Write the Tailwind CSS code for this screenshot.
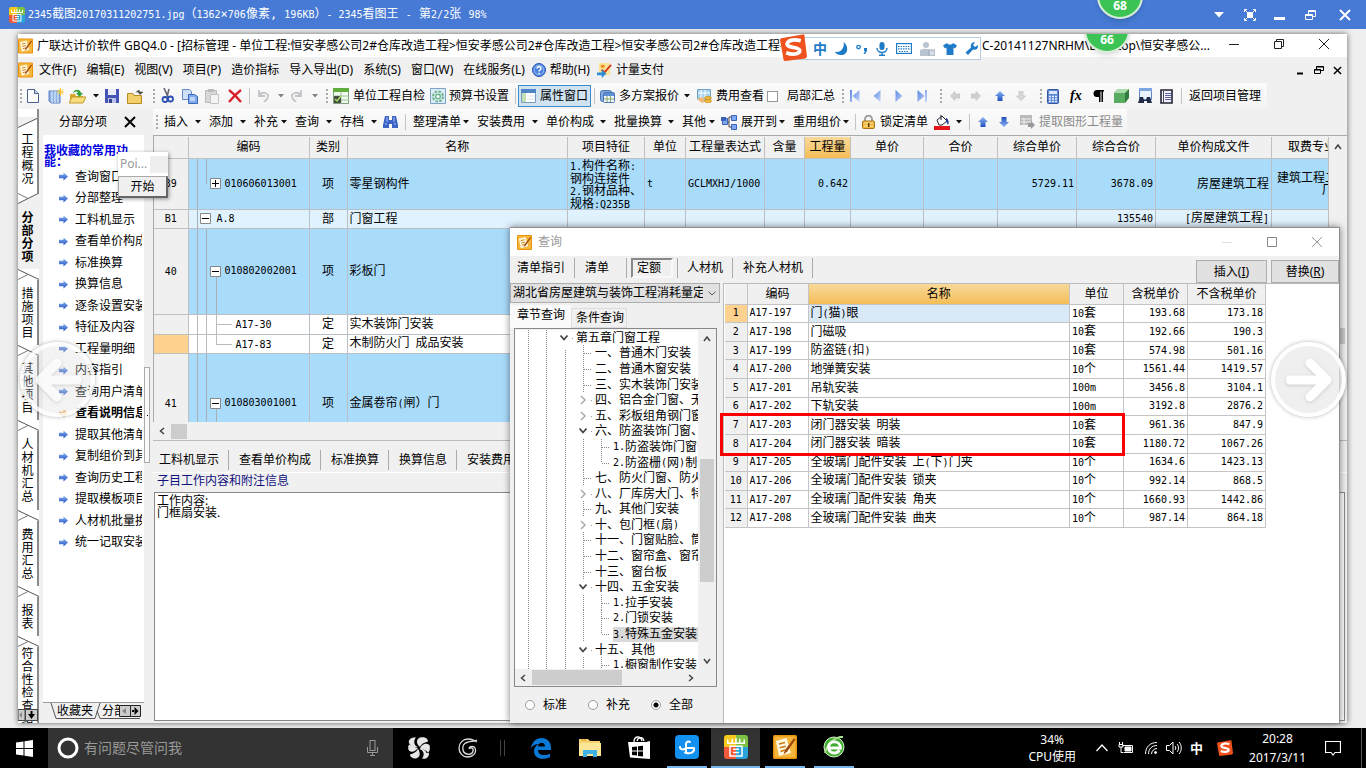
<!DOCTYPE html>
<html lang="zh-CN">
<head>
<meta charset="utf-8">
<title>2345看图王</title>
<script src="https://cdn.jsdelivr.net/npm/@tailwindcss/browser@4"></script>
</head>
<body class="h-screen flex flex-col overflow-hidden bg-[#efefef] text-[12px] text-black leading-4 font-['Noto_Sans','Noto_Sans_CJK_SC',sans-serif] whitespace-nowrap">

<svg class="absolute size-0" aria-hidden="true">
  <defs>
    <linearGradient id="blu" x1="0" y1="0" x2="0" y2="1"><stop offset="0" stop-color="#8db4f2"/><stop offset="1" stop-color="#1f4fc0"/></linearGradient>
    <linearGradient id="soft" x1="0" y1="0" x2="1" y2="1"><stop offset="0" stop-color="#5c86e0"/><stop offset="1" stop-color="#c5d6fa"/></linearGradient>
    <symbol id="app" viewBox="0 0 16 16"><rect width="16" height="16" rx="1" fill="#e8920c"/><rect x="1" y="1" width="14" height="14" fill="#f6b63c"/><path d="M2 4l7-2 3 10-8 2z" fill="#fff8e0"/><path d="M4 6l4-1M4.500 8.500l4-1M5 11l3-1" stroke="#c77a10" fill="none"/><path d="M14 2L8 10l-1 3 2.500-2L15 3z" fill="#a3490c"/></symbol>
    <symbol id="viewer" viewBox="0 0 16 16"><path d="M2 0h6v8H0V2a2 2 0 012-2z" fill="#f7c81e"/><path d="M8 0h6a2 2 0 012 2v6H8z" fill="#7cc142"/><path d="M0 8h8v8H2a2 2 0 01-2-2z" fill="#ee5a3a"/><path d="M8 8h8v6a2 2 0 01-2 2H8z" fill="#2aa3d8"/><path d="M2.500 5.500V3M5.500 5V2.500M8 5V2M10.500 5V2.500M13.500 5.500V3M2 5.500h12M4 7.500h8V14H4zM6 9.500h4M6 11.700h4" stroke="#fff" fill="none"/></symbol>
    <symbol id="go" viewBox="0 0 10 10"><path d="M0 3h5V0.500L10 5 5 9.500V7H0z" fill="url(#blu)"/></symbol>
    <symbol id="up" viewBox="0 0 10 10"><path d="M5 0l5 5H7.500v5h-5V5H0z" fill="url(#blu)"/></symbol>
    <symbol id="dn" viewBox="0 0 6 4"><path d="M0 0h6L3 3.500z" fill="#111"/></symbol>
    <symbol id="grip" viewBox="0 0 3 16"><path d="M1 1v15" stroke="#aaa" stroke-width="2" stroke-dasharray="2 2"/></symbol>
    <symbol id="leaf" viewBox="0 0 20 16"><path d="M8.500 0v16M9 8.500h8" stroke="#888" stroke-dasharray="1 1" fill="none"/></symbol>
    <symbol id="leafend" viewBox="0 0 20 16"><path d="M8.500 0v8M9 8.500h8" stroke="#888" stroke-dasharray="1 1" fill="none"/></symbol>
    <symbol id="vert" viewBox="0 0 18 16"><path d="M8.500 0v16" stroke="#888" stroke-dasharray="1 1" fill="none"/></symbol>
    <symbol id="open" viewBox="0 0 20 16"><path d="M4.500 5.500L8 9.500l3.500-4" stroke="#444" stroke-width="1.800" fill="none"/><path d="M16 8.500h1" stroke="#999"/></symbol>
    <symbol id="shut" viewBox="0 0 20 16"><path d="M6 4l4 4-4 4" stroke="#aaa" stroke-width="1.500" fill="none"/><path d="M16 8.500h1" stroke="#999"/></symbol>
    <symbol id="zig" viewBox="0 0 21 11"><path d="M0 0h21v11H0z" fill="#fff"/><path d="M0 0.500l21 10" stroke="#555" fill="none"/><path d="M0 10.500l10-5" stroke="#777" fill="none"/></symbol>
    <symbol id="sogou" viewBox="0 0 26 26"><path d="M1 4L22 0.500a1 1 0 011.500 1L26 22l-1.500 1.500L5 26a1.500 1.500 0 01-1.500-1L0 5.500z" fill="#f0521d"/><path d="M20 6.500c-5-1.500-12-1-13 2.500-1 5 12 3 12 7s-8 4-13 2" stroke="#fff" stroke-width="3.600" fill="none"/></symbol>
  </defs>
</svg>

<!-- viewer title bar -->
<header class="relative z-20 h-[29px] shrink-0 bg-[#467ad4] text-white flex items-center px-[9px] font-['DejaVu_Sans_Mono','Noto_Sans_CJK_SC',monospace] [&_span]:text-[10px]">
  <svg class="size-4 mr-[3px]"><use href="#viewer"/></svg>
  <h1><span>2345</span>截图<span>20170311202751.jpg</span>（<span>1362</span>×<span>706</span>像素, <span>196KB</span>）<span>- 2345</span>看图王 <span>-</span> 第<span>2/2</span>张 <span>98%</span></h1>
  <div class="ml-auto flex items-center gap-[14px]">
    <button aria-label="菜单"><svg class="w-[10px] h-[6px]" viewBox="0 0 10 6"><path d="M0 0h10L5 5.500z" fill="#fff"/></svg></button>
    <button aria-label="全屏" class="ml-[6px]"><svg class="size-3" viewBox="0 0 12 12" fill="none" stroke="#fff"><path d="M0.500 3V0.500H3M9 0.500h2.500V3M11.500 9v2.500H9M3 11.500H0.500V9M1 1l2.500 2.500M11 1L8.500 3.500M11 11L8.500 8.500M1 11l2.500-2.500"/><rect x="3.500" y="3.500" width="5" height="5" fill="#fff"/></svg></button>
    <button aria-label="最小化" class="ml-[4px]"><svg class="w-[11px] h-3" viewBox="0 0 11 12"><path d="M0 8h11v3H0z" fill="#fff"/></svg></button>
    <button aria-label="还原" class="ml-[6px]"><svg class="size-3" viewBox="0 0 12 12" fill="none" stroke="#fff"><path d="M0.500 5.500h7v5h-7zM3.500 5V1.500h7v6H8M0.500 6.500h7M3.500 2.500h7"/></svg></button>
    <button aria-label="关闭" class="ml-[8px] mr-[6px]"><svg class="size-3" viewBox="0 0 12 12"><path d="M1 1l10 10M11 1L1 11" stroke="#fff" stroke-width="2"/></svg></button>
  </div>
  <div class="absolute -top-[27px] right-[223px] size-[46px] rounded-full border-2 border-[#d8ecd8] bg-[#3cc356] shadow-md flex items-end justify-center pb-[3px] text-[12px] font-bold font-['Noto_Sans',sans-serif]">68</div>
</header>

<main class="relative flex-1 min-h-0 pl-[18px] pr-[19px] pt-[5px] pb-[5px]">
<div class="relative h-full flex flex-col bg-[#f0f0f0] shadow-[0_0_6px_rgba(0,0,0,0.6)]">

  <!-- application title -->
  <div class="h-[23px] shrink-0 bg-white flex items-center relative">
    <svg class="w-[15px] h-4 mr-[4px]"><use href="#app"/></svg>
    <div class="w-[744px] overflow-hidden">广联达计价软件 GBQ4.0 - [招标管理 - 单位工程:恒安孝感公司2#仓库改造工程&gt;恒安孝感公司2#仓库改造工程&gt;恒安孝感公司2#仓库改造工程-</div>
    <div class="ml-auto mr-[137px]">C-20141127NRHM\Desktop\恒安孝感公...</div>
    <div class="absolute top-0 right-[215px] w-[50px] h-[26px] overflow-hidden"><div class="ml-[2px] -mt-[27px] size-[46px] rounded-full border-2 border-[#d8ecd8] bg-[#3cc356] shadow-md flex items-end justify-center pb-[3px] font-bold text-white">66</div></div>
    <div class="absolute right-[17px] top-[4px] flex items-center gap-[33px]">
      <button aria-label="最小化"><svg class="size-3" viewBox="0 0 12 12"><path d="M1 6.500h10" stroke="#222"/></svg></button>
      <button aria-label="还原"><svg class="size-3" viewBox="0 0 12 12" fill="none" stroke="#222"><path d="M1.500 3.500h7v7h-7zM3.500 3V1.500h7v7H9"/></svg></button>
      <button aria-label="关闭"><svg class="size-3" viewBox="0 0 12 12"><path d="M1 1l10 10M11 1L1 11" stroke="#222"/></svg></button>
    </div>
  </div>

  <!-- menu -->
  <nav class="h-[26px] shrink-0 flex items-center gap-[10px]">
    <svg class="w-[15px] h-4 -mr-[4px]"><use href="#app"/></svg>
    <button>文件(F)</button><button>编辑(E)</button><button>视图(V)</button><button>项目(P)</button><button>造价指标</button><button>导入导出(D)</button><button>系统(S)</button><button>窗口(W)</button><button>在线服务(L)</button>
    <button class="flex items-center gap-1 -ml-[3px]"><svg class="size-[14px]" viewBox="0 0 14 14"><circle cx="7" cy="7" r="6.500" fill="#4b82e0" stroke="#2b57b8"/><circle cx="7" cy="7" r="4.800" fill="none" stroke="#b7d0f8" stroke-width=".7"/><path d="M5 5.500c0-2.500 4-2.500 4 0C9 7 7 7 7 8.500M7 9.700v1.300" stroke="#fff" stroke-width="1.500" fill="none"/></svg>帮助(H)</button>
    <button class="flex items-center gap-1 -ml-[3px]"><svg class="size-[15px]" viewBox="0 0 16 16"><path d="M2 0h12v13H2z" fill="#fbe49a"/><path d="M4 2h4v3H4z" fill="#f08a20"/><path d="M15 2L8 10l-3-3" stroke="#d23a1c" stroke-width="2" fill="none"/><path d="M0 10h5V7l5 4.500L5 16v-3H0z" fill="#2d8fd8"/></svg>计量支付</button>
    <div class="ml-auto mr-[5px] flex gap-[9px]">
      <button aria-label="最小化子窗口"><svg class="size-[10px]" viewBox="0 0 10 10"><path d="M2 8.500h6" stroke="#000" stroke-width="2"/></svg></button>
      <button aria-label="还原子窗口"><svg class="size-[10px]" viewBox="0 0 10 10" fill="none" stroke="#000"><path d="M0.500 4.500h6v4h-6zM2.500 4V1.500h7v4H7M0 5h7M2 2h8"/></svg></button>
      <button aria-label="关闭子窗口"><svg class="size-[9px]" viewBox="0 0 10 10"><path d="M1 1l8 8M9 1L1 9" stroke="#000" stroke-width="1.600"/></svg></button>
    </div>
  </nav>

  <!-- main toolbar; every item spans up to the start of the next -->
  <div class="h-[26px] shrink-0 flex items-center">
   <div class="h-full flex items-center bg-gradient-to-b from-[#fbfbfb] to-[#f3f3f3] pl-[2px] pr-[6px] [&>*]:shrink-0">
    <svg class="w-[3px] h-4 mr-[4px]"><use href="#grip"/></svg>
    <button aria-label="新建" class="w-[21px]"><svg class="w-3 h-[14px]" viewBox="0 0 12 14"><path d="M0.500 0.500h7l4 4v9H0.500z" fill="#fff" stroke="#4a5f94"/><path d="M7.500 0.500v4h4" fill="#cfd9f0" stroke="#4a5f94"/></svg></button>
    <button aria-label="新建清单" class="w-[21px]"><svg class="size-4" viewBox="0 0 16 16"><path d="M1 3h11v12H3L1 13z" fill="#8fb4e6" stroke="#5b7fc0"/><path d="M4 3v12M7 3v12M10 3v12" stroke="#e5effc"/><path d="M12.500 0v8M8.500 4h8M10 1.500l5 5M15 1.500l-5 5" stroke="#f4c52a"/></svg></button>
    <button aria-label="打开" class="w-[24px]"><svg class="w-[17px] h-4" viewBox="0 0 17 16"><path d="M1 6h5l1 2h7v7H1z" fill="#d9a52c"/><path d="M0 15l3-6h14l-3 6z" fill="#f8dc7d" stroke="#c69a2e"/><path d="M4 6c0-5 7-6 8-1h2l-3.500 4L7 5h2c-1-2-3-2-5 1z" fill="#37a03a"/></svg></button>
    <svg class="w-[6px] h-1 mr-[6px]"><use href="#dn"/></svg>
    <button aria-label="保存" class="w-[22px]"><svg class="size-[14px]" viewBox="0 0 14 14"><path d="M0 0h14v14H0z" fill="#4553b5"/><path d="M3 0h8v6H3z" fill="#e9ecfb"/><path d="M3 9h8v5H3z" fill="#b9c2e8"/><path d="M4 10h3v4H4z" fill="#34408f"/></svg></button>
    <button aria-label="关闭工程" class="w-[26px]"><svg class="w-4 h-[15px]" viewBox="0 0 16 15"><path d="M0.500 4.500H6l1 2h7.500v8H0.500z" fill="#f2cf6a" stroke="#b88a26"/><path d="M9 3.500c2-3 4-2 4-1M11 3h5l-3 2.500z" fill="#444" stroke="#444" stroke-width=".5"/></svg></button>
    <svg class="w-[3px] h-4 mr-[5px]"><use href="#grip"/></svg>
    <button aria-label="剪切" class="w-[21px]"><svg class="w-[13px] h-4" viewBox="0 0 13 16" fill="none"><path d="M3 0l4 9M8 1L6 9" stroke="#667" stroke-width="1.600"/><circle cx="4" cy="11.500" r="2.500" stroke="#2c4fb0" stroke-width="1.800"/><circle cx="9.500" cy="11" r="2.500" stroke="#2c4fb0" stroke-width="1.800"/></svg></button>
    <button aria-label="复制" class="w-[23px]"><svg class="w-4 h-[15px]" viewBox="0 0 16 15"><path d="M0.500 0.500h7l2 2v8h-9z" fill="#cfe0fa" stroke="#6487c8"/><path d="M6.500 5.500h6l3 2v7h-9z" fill="#7eaaf0" stroke="#3b66b4"/><path d="M8 9h5M8 11h5" stroke="#fff"/></svg></button>
    <button aria-label="粘贴" class="w-[23px]"><svg class="w-[14px] h-4" viewBox="0 0 14 16"><path d="M0.500 2.500h11v12h-11z" fill="#d8d8d8" stroke="#bbb"/><path d="M3 1h6v3H3z" fill="#bbb"/><path d="M5.500 6.500h8v9h-8z" fill="#f4f4f4" stroke="#c4c4c4"/></svg></button>
    <button aria-label="删除" class="w-[21px]"><svg class="size-[14px]" viewBox="0 0 14 14"><path d="M1 1c4 3 8 7 12 12M13 1C9 4 5 8 1 13" stroke="#d91f2c" stroke-width="2.300" fill="none"/></svg></button>
    <i class="w-[8px] h-4 border-l border-[#c4c4c4]"></i>
    <button aria-label="撤销" class="w-[21px]"><svg class="size-3" viewBox="0 0 12 12"><path d="M2 0v6h6M2 5c4-4 10-2 9 2-1 3-3 4-4 5" stroke="#c2c2c8" stroke-width="1.800" fill="none"/></svg></button>
    <svg class="w-[6px] h-1 mr-[7px] opacity-50"><use href="#dn"/></svg>
    <button aria-label="重做" class="w-[21px]"><svg class="size-3" viewBox="0 0 12 12"><path d="M10 0v6H4M10 5C6 1 0 3 1 7c1 3 3 4 4 5" stroke="#c2c2c8" stroke-width="1.800" fill="none"/></svg></button>
    <svg class="w-[6px] h-1 mr-[8px] opacity-50"><use href="#dn"/></svg>
    <svg class="w-[3px] h-4 mr-[4px]"><use href="#grip"/></svg>
    <button class="w-[97px] flex items-center gap-1"><svg class="size-4" viewBox="0 0 16 16"><path d="M0.500 0.500h15v15H0.500z" fill="#f4faf0" stroke="#7aa07a"/><path d="M0 0h16v4H0z" fill="#5fae3c"/><path d="M8 4v12M8 8h8M8 12h8M0 8h8" stroke="#9bbf9b"/><path d="M1 8h7v7H1z" fill="#4b4b4b"/><path d="M2 11l2 2 4-5" stroke="#9fe05a" stroke-width="1.500" fill="none"/></svg>单位工程自检</button>
    <button class="w-[85px] flex items-center gap-[3px]"><svg class="size-4" viewBox="0 0 16 16"><path d="M0.500 0.500h15v15H0.500z" fill="#dcebf8" stroke="#7fa3c4"/><circle cx="8" cy="8.500" r="5" fill="none" stroke="#6cb58c" stroke-width="2" stroke-dasharray="2.500 1.400"/><circle cx="8" cy="8.500" r="2.300" fill="#fff" stroke="#6cb58c" stroke-width="1.400"/></svg>预算书设置</button>
    <i class="w-[3px] h-4 border-l border-[#c4c4c4]"></i>
    <button class="w-[73px] h-[22px] mr-[3px] px-[2px] flex items-center gap-1 border border-[#3d8bc8] bg-[#cfe3f3]"><svg class="w-[15px] h-[14px]" viewBox="0 0 15 14"><path d="M0.500 0.500h14v13H0.500z" fill="#fff" stroke="#7b9bbd"/><path d="M0 0h15v4H0z" fill="#4d86c6"/><path d="M1 4h4v9H1z" fill="#bfe0b8"/><path d="M6 7h8M6 10h8" stroke="#d8e4f0"/></svg>属性窗口</button>
    <i class="w-[6px] h-4 border-l border-[#c4c4c4]"></i>
    <button class="w-[84px] flex items-center gap-1"><svg class="size-[15px]" viewBox="0 0 15 15"><rect x="0.500" y="1.500" width="11" height="11" rx="2" fill="#7fa9df" stroke="#4e77b5"/><rect x="3.500" y="3.500" width="11" height="10" rx="1" fill="#f3f8ff" stroke="#4e77b5"/><path d="M4 4h10v3H4z" fill="#5d8fd2"/><path d="M4 10h10M7 7v6M10.500 7v6" stroke="#86a96b"/></svg>多方案报价</button>
    <svg class="w-[6px] h-1 mr-[7px]"><use href="#dn"/></svg>
    <button class="flex items-center gap-1 w-[70px]"><svg class="size-[15px]" viewBox="0 0 15 15"><path d="M0.500 0.500h13v10h-13z" fill="#a9d4ef" stroke="#6ba0c6"/><path d="M1 4h12M4 1v9M8 1v9" stroke="#fff"/><path d="M0 10l5-2 4 4-4 2z" fill="#f0b77a"/><ellipse cx="11" cy="9" rx="3.500" ry="1.700" fill="#f0b93a" stroke="#b8861f" stroke-width=".6"/><ellipse cx="11" cy="12" rx="3.500" ry="1.700" fill="#f0b93a" stroke="#b8861f" stroke-width=".6"/></svg>费用查看</button>
    <label class="w-[75px] flex items-center gap-[9px]"><input type="checkbox" class="appearance-none size-[11px] border border-[#999] bg-white">局部汇总</label>
    <svg class="w-[3px] h-4 mr-[5px]"><use href="#grip"/></svg>
    <button aria-label="首条" class="w-[23px]"><svg class="w-[10px] h-3" viewBox="0 0 10 12"><path d="M0 0h2v12H0zM9.500 0v12L2.500 6z" fill="url(#soft)"/></svg></button>
    <button aria-label="上一条" class="w-[22px]"><svg class="w-2 h-3" viewBox="0 0 8 12"><path d="M7.500 0v12L0.500 6z" fill="url(#soft)"/></svg></button>
    <button aria-label="下一条" class="w-[22px]"><svg class="w-2 h-3" viewBox="0 0 8 12"><path d="M0.500 0v12L7.500 6z" fill="url(#soft)"/></svg></button>
    <button aria-label="末条" class="w-[23px]"><svg class="w-[10px] h-3" viewBox="0 0 10 12"><path d="M8 0h2v12H8zM0.500 0v12L7.500 6z" fill="url(#soft)"/></svg></button>
    <svg class="w-[3px] h-4 mr-[7px]"><use href="#grip"/></svg>
    <button aria-label="左移" class="w-[21px]"><svg class="size-[10px]" viewBox="0 0 10 10"><path d="M10 3H5V0.500L0.500 5 5 9.500V7h5z" fill="#d0d0d0" stroke="#bbb" stroke-width=".6"/></svg></button>
    <button aria-label="右移" class="w-[24px]"><svg class="size-[10px]" viewBox="0 0 10 10"><path d="M0 3h5V0.500L9.500 5 5 9.500V7H0z" fill="#d0d0d0" stroke="#bbb" stroke-width=".6"/></svg></button>
    <button aria-label="上移" class="w-[21px]"><svg class="size-[10px]"><use href="#up"/></svg></button>
    <button aria-label="下移" class="w-[24px]"><svg class="size-[10px]" viewBox="0 0 10 10"><path d="M3 0h4v5h2.500L5 9.500 0.500 5H3z" fill="#d8d8d8" stroke="#bbb" stroke-width=".6"/></svg></button>
    <svg class="w-[3px] h-4 mr-[4px]"><use href="#grip"/></svg>
    <button aria-label="计算器" class="w-[23px]"><svg class="w-3 h-[15px]" viewBox="0 0 12 15"><rect x="0.500" y="0.500" width="11" height="14" rx="1" fill="#5f86d4" stroke="#33569e"/><path d="M2 2h8v3H2z" fill="#dbe8fb"/><path d="M2 7.500h8M2 10h8M2 12.500h8" stroke="#e6eefc" stroke-width="1.400" stroke-dasharray="2 1"/></svg></button>
    <button aria-label="函数" class="w-[23px] text-left text-[14px] font-bold italic font-['Liberation_Serif',serif]">fx</button>
    <button aria-label="段落" class="w-[21px]"><svg class="w-[11px] h-3" viewBox="0 0 11 12"><path d="M4 0h7v1.500h-1V12H8.500V1.500h-1V12H6V7H4a3.500 3.500 0 010-7z" fill="#000"/></svg></button>
    <button aria-label="模型" class="w-[23px]"><svg class="size-[15px]" viewBox="0 0 15 15"><path d="M0 4l4-4h11v9l-4 5H0z" fill="#2f7c3c"/><path d="M0 4h11v10H0z" fill="#58ab5f"/><path d="M0 4l4-4h11l-4 4z" fill="#a9dca8"/></svg></button>
    <button aria-label="查找" class="w-[23px]"><svg class="size-4" viewBox="0 0 16 16"><path d="M2.500 0.500h12v11h-12z" fill="#eaf2fd" stroke="#5f86c8"/><path d="M2 0h13v3H2z" fill="#7fa5e0"/><path d="M1 15l2-6h3l1 3h2l1-3h3l2 6h-5v-2H7v2z" fill="#222b45"/></svg></button>
    <button aria-label="列表" class="w-[21px]"><svg class="w-[13px] h-[15px]" viewBox="0 0 13 15"><path d="M1 1h11v13H1z" fill="#f4f4ff" stroke="#223" stroke-width="1.600"/><path d="M3.500 2v11" stroke="#445"/><path d="M5 4.500h6M5 6.500h6M5 8.500h6M5 10.500h6" stroke="#5b5fa8"/></svg></button>
    <i class="w-[8px] h-4 border-l border-[#c4c4c4]"></i>
    <button>返回项目管理</button>
   </div>
  </div>

  <div class="flex-1 min-h-0 flex">
    <!-- vertical page tabs -->
    <div class="w-[21px] shrink-0 flex flex-col overflow-hidden relative [&>button]:shrink-0 [&>button]:flex [&>button]:items-center [&>button]:justify-center [&>button]:bg-white [&>button]:border-r-2 [&>button]:border-[#8a8a8a] [&_span]:w-3 [&_span]:whitespace-normal [&_span]:break-all [&_span]:leading-[13px] [&>svg]:shrink-0">
      <button class="h-[84px] pt-4"><span>工程概况</span></button>
      <svg class="w-[21px] h-[11px]" viewBox="0 0 21 11"><path d="M0 0h21L0 11z" fill="#fff"/><path d="M21 0L0 10.500" stroke="#555"/><path d="M0 0.500l10 5" stroke="#777"/></svg>
      <button class="h-[65px] !bg-[#f0f0f0] !border-transparent font-bold"><span>分部分项</span></button>
      <svg class="w-[21px] h-[11px]"><use href="#zig"/></svg>
      <button class="h-[65px]"><span>措施项目</span></button>
      <svg class="w-[21px] h-[11px]"><use href="#zig"/></svg>
      <button class="h-[64px]"><span>其他项目</span></button>
      <svg class="w-[21px] h-[11px]"><use href="#zig"/></svg>
      <button class="h-[79px]"><span>人材机汇总</span></button>
      <svg class="w-[21px] h-[11px]"><use href="#zig"/></svg>
      <button class="h-[65px]"><span>费用汇总</span></button>
      <svg class="w-[21px] h-[11px]"><use href="#zig"/></svg>
      <button class="h-[39px]"><span>报表</span></button>
      <svg class="w-[21px] h-[11px]"><use href="#zig"/></svg>
      <button class="h-[78px]"><span>符合性检查结</span></button>
      <svg class="absolute left-0 top-[8px] w-[21px] h-[11px]" viewBox="0 0 21 11"><path d="M0 0h21v1L0 10z" fill="#f0f0f0"/><path d="M0 10.500l21-10" stroke="#555"/></svg>
      <svg class="absolute left-0 bottom-[2px] w-5 h-3" viewBox="0 0 20 12"><path d="M0 0.500h7v11H0zM7.500 0.500h12v11h-12z" fill="#ccc" stroke="#444"/><path d="M1 6l3-3v6z" fill="#888"/><path d="M10 5h7l-3.500 5zM12.500 2h2v4h-2z" fill="#000"/></svg>
    </div>

    <!-- favourites panel -->
    <aside class="w-[114px] shrink-0 flex">
      <div class="w-[105px] pl-1 flex flex-col">
        <div class="h-[26px] shrink-0 flex items-center pl-4 gap-[17px]">分部分项<button aria-label="关闭面板"><svg class="size-3" viewBox="0 0 12 12"><path d="M1 1l10 10M11 1L1 11" stroke="#000" stroke-width="2"/></svg></button></div>
        <div class="flex-1 min-h-0 bg-white overflow-hidden pt-[10px]">
          <h2 class="h-[21px] w-[92px] pl-px font-bold text-[#0000e0] leading-[11px] whitespace-normal break-all">我收藏的常用功能：</h2>
          <ul class="h-[387px] grid auto-rows-fr [&>li]:flex [&>li]:items-center [&>li]:gap-[7px] [&>li]:pl-4 [&>li]:overflow-hidden [&_svg]:size-[9px] [&_svg]:shrink-0 w-[99px]">
            <li><svg><use href="#go"/></svg><a href="#">查询窗口</a></li>
            <li><svg><use href="#go"/></svg><a href="#">分部整理</a></li>
            <li><svg><use href="#go"/></svg><a href="#">工料机显示</a></li>
            <li><svg><use href="#go"/></svg><a href="#">查看单价构成</a></li>
            <li><svg><use href="#go"/></svg><a href="#">标准换算</a></li>
            <li><svg><use href="#go"/></svg><a href="#">换算信息</a></li>
            <li><svg><use href="#go"/></svg><a href="#">逐条设置安装</a></li>
            <li><svg><use href="#go"/></svg><a href="#">特征及内容</a></li>
            <li><svg><use href="#go"/></svg><a href="#">工程量明细</a></li>
            <li><svg><use href="#go"/></svg><a href="#">内容指引</a></li>
            <li><svg><use href="#go"/></svg><a href="#">查询用户清单</a></li>
            <li class="font-bold"><svg viewBox="0 0 10 10"><path d="M0 3h5V0.500L10 5 5 9.500V7H0z" fill="#f2a33c"/></svg><a href="#">查看说明信息</a></li>
            <li><svg><use href="#go"/></svg><a href="#">提取其他清单</a></li>
            <li><svg><use href="#go"/></svg><a href="#">复制组价到其</a></li>
            <li><svg><use href="#go"/></svg><a href="#">查询历史工程</a></li>
            <li><svg><use href="#go"/></svg><a href="#">提取模板项目</a></li>
            <li><svg><use href="#go"/></svg><a href="#">人材机批量换</a></li>
            <li><svg><use href="#go"/></svg><a href="#">统一记取安装</a></li>
          </ul>
        </div>
        <div class="h-[21px] shrink-0 relative overflow-hidden border-t border-[#999]">
          <svg class="absolute left-0 top-0 w-[101px] h-[17px]" viewBox="0 0 101 17" fill="none" stroke="#555"><path d="M8 0l5 15.500h39L57 0M54 8l3 7.500h40"/></svg>
          <div class="relative flex pl-[14px] gap-[9px]"><button>收藏夹</button><button>分部</button></div>
          <svg class="absolute right-[3px] top-[2px] w-[22px] h-3" viewBox="0 0 22 12"><path d="M0.500 0.500h11v11h-11zM11.500 0.500h10v11h-10z" fill="#ccc" stroke="#222"/><path d="M3 6l4-3v6z" fill="#888"/><path d="M19.500 6l-4-4v8zM13 5h3v2h-3z" fill="#000"/></svg>
        </div>
      </div>
      <div class="w-[6px] h-24 mt-[258px] border border-[#aaa] bg-[#fafafa] flex items-center justify-center"><i class="size-px bg-black"></i></div>
    </aside>

    <section class="flex-1 min-w-0 flex flex-col">
      <!-- editing toolbar -->
      <div class="h-[26px] shrink-0 flex items-center">
       <div class="h-full flex items-center bg-gradient-to-b from-[#fbfbfb] to-[#f3f3f3] pl-[3px] pr-[4px] [&>*]:shrink-0 [&>button]:flex [&>button]:items-center [&>button]:justify-between [&>button]:pr-2 [&>button>svg]:w-[6px] [&>button>svg]:h-1">
        <svg class="w-[3px] h-4 mr-[5px]"><use href="#grip"/></svg>
        <button class="w-[45px]">插入<svg><use href="#dn"/></svg></button>
        <button class="w-[45px]">添加<svg><use href="#dn"/></svg></button>
        <button class="w-[41px]">补充<svg><use href="#dn"/></svg></button>
        <button class="w-[45px]">查询<svg><use href="#dn"/></svg></button>
        <button class="w-[43px] !pr-[6px]">存档<svg><use href="#dn"/></svg></button>
        <svg class="w-[15px] h-[14px] mr-[7px]" viewBox="0 0 15 14"><path d="M2 1h4v4h3V1h4l2 9v3H9V9H6v4H0v-3z" fill="#3b62c4"/><path d="M2 9h2M11 9h2M4 2v5M11 2v5" stroke="#a8c4f5"/></svg>
        <i class="w-[8px] h-4 border-l border-[#c4c4c4]"></i>
        <button class="w-[64px]">整理清单<svg><use href="#dn"/></svg></button>
        <button class="w-[69px]">安装费用<svg><use href="#dn"/></svg></button>
        <button class="w-[68px]">单价构成<svg><use href="#dn"/></svg></button>
        <button class="w-[68px]">批量换算<svg><use href="#dn"/></svg></button>
        <button class="w-[39px] !pr-[6px]">其他<svg><use href="#dn"/></svg></button>
        <svg class="size-4 mr-1" viewBox="0 0 16 16"><path d="M4 8h4M8 3v10M8 3h3M8 13h3" stroke="#444" fill="none"/><path d="M1.500 4.500h5v6h-5zM10.500 1.500h5v5h-5zM10.500 10.500h5v5h-5z" fill="#7fa8f0" stroke="#3a62b8"/><path d="M0 3h5v4H0z" fill="#3a62b8"/></svg>
        <button class="w-[52px]">展开到<svg><use href="#dn"/></svg></button>
        <button class="w-[62px] !pr-[6px]">重用组价<svg><use href="#dn"/></svg></button>
        <i class="w-[7px] h-4 border-l border-[#c4c4c4]"></i>
        <svg class="w-[13px] h-[14px] mr-[5px]" viewBox="0 0 13 14"><path d="M3 6V4a3.500 3.500 0 017 0v2" fill="none" stroke="#999" stroke-width="1.800"/><rect x="0.500" y="6" width="12" height="7.500" rx="1" fill="#f0b83c" stroke="#a8761a"/><path d="M2 8h9M2 11h9" stroke="#ffe6a0"/><path d="M6 8h1.500v4H6z" fill="#5a3a08"/></svg>
        <button class="w-[54px]">锁定清单</button>
        <svg class="w-4 h-[17px] mr-[6px]" viewBox="0 0 16 17"><path d="M3 6l5-4 5 5-5 4H5z" fill="#fff" stroke="#223"/><path d="M7 1v5" stroke="#223"/><path d="M12 4c3 1 3 5 2 7l-2-4z" fill="#203a9a"/><path d="M0 12h16v4H0z" fill="#e8141c"/></svg>
        <svg class="w-[6px] h-1 mr-[7px]"><use href="#dn"/></svg>
        <i class="w-[9px] h-4 border-l border-[#c4c4c4]"></i>
        <svg class="size-[10px] mr-[11px]"><use href="#up"/></svg>
        <svg class="size-[10px] mr-[11px] rotate-180"><use href="#up"/></svg>
        <svg class="w-[15px] h-[14px] mr-1" viewBox="0 0 15 14"><path d="M0 0h12v10H0z" fill="#bbb"/><path d="M1 4h10M1 7h10M4 3v7" stroke="#eee"/><path d="M8 8h3V6l4 4-4 4v-2H8z" fill="#999"/></svg>
        <div class="text-[#8a8a8a]">提取图形工程量</div>
       </div>
      </div>

      <!-- bill of quantities -->
      <div class="h-[287px] shrink-0 flex border-t border-l border-[#aaa]">
        <div class="flex-1 min-w-0 overflow-hidden pt-px">
        <table class="w-full table-fixed border-collapse font-['DejaVu_Sans_Mono','Noto_Sans_CJK_SC',monospace] [&_th]:font-normal [&_th]:bg-[#f0f0f0] [&_th]:border-r [&_th]:border-b [&_th]:border-[#c0c0c0] [&_th]:p-0 [&_th]:overflow-hidden [&_td]:border-r [&_td]:border-b [&_td]:border-[#b9bfc4] [&_td]:py-0 [&_td]:px-[2px] [&_td]:overflow-hidden [&_span]:text-[10px] [&_td.code]:relative">
          <colgroup><col class="w-[34px]"><col class="w-[121px]"><col class="w-[38px]"><col><col class="w-[77px]"><col class="w-[41px]"><col class="w-[79px]"><col class="w-[40px]"><col class="w-[46px]"><col class="w-[73px]"><col class="w-[74px]"><col class="w-[79px]"><col class="w-[79px]"><col class="w-[116px]"><col class="w-[57px]"></colgroup>
          <thead><tr class="h-[21px]"><th></th><th>编码</th><th>类别</th><th>名称</th><th>项目特征</th><th>单位</th><th>工程量表达式</th><th>含量</th><th class="bg-gradient-to-b from-[#f8d999] to-[#f3bd55]">工程量</th><th>单价</th><th>合价</th><th>综合单价</th><th>综合合价</th><th>单价构成文件</th><th><div class="pl-4 text-left">取费专业</div></th></tr></thead>
          <tbody>
            <tr class="h-[51px] bg-[#a9dbfb]"><th><span>39</span></th>
              <td class="code"><i class="absolute left-2 inset-y-0 w-px bg-[#a8b0b6]"></i><i class="absolute left-[17px] top-0 h-1/2 w-px bg-[#a8b0b6]"></i><div class="pl-[19px] flex items-center gap-1"><svg class="size-[11px]" viewBox="0 0 11 11"><path d="M0.500 0.500h10v10h-10z" fill="#fff" stroke="#888"/><path d="M2 5.500h7M5.500 2v7" stroke="#000"/></svg><span>010606013001</span></div></td>
              <td class="text-center">项</td><td>零星钢构件</td><td class="leading-3"><div class="h-12"><span>1.</span>构件名称<span>:</span><br>钢构连接件<br><span>2.</span>钢材品种、<br>规格<span>:Q235B</span></div></td><td><span>t</span></td><td><span>GCLMXHJ/1000</span></td><td></td><td class="text-right"><span>0.642</span></td><td></td><td></td><td class="text-right"><span>5729.11</span></td><td class="text-right"><span>3678.09</span></td><td class="text-right">房屋建筑工程</td><td class="leading-3"><div class="pl-[3px]">建筑工程二</div><div class="pl-[48px]">厂</div></td></tr>
            <tr class="h-[19px] bg-[#e0f2fe]"><th><span>B1</span></th>
              <td class="code"><i class="absolute left-2 inset-y-0 w-px bg-[#a8b0b6]"></i><div class="relative pl-[9px] flex items-center gap-[6px]"><svg class="size-[11px]" viewBox="0 0 11 11"><path d="M0.500 0.500h10v10h-10z" fill="#fff" stroke="#888"/><path d="M2 5.500h7" stroke="#000"/></svg><span>A.8</span></div></td>
              <td class="text-center">部</td><td>门窗工程</td><td></td><td></td><td></td><td></td><td></td><td></td><td></td><td></td><td class="text-right"><span>135540</span></td><td class="text-right"><span>[</span>房屋建筑工程<span>]</span></td><td></td></tr>
            <tr class="h-[86px] bg-[#a9dbfb]"><th><span>40</span></th>
              <td class="code"><i class="absolute left-2 inset-y-0 w-px bg-[#a8b0b6]"></i><i class="absolute left-[17px] inset-y-0 w-px bg-[#a8b0b6]"></i><i class="absolute left-[27px] top-1/2 bottom-0 w-px bg-[#a8b0b6]"></i><div class="relative pl-[19px] flex items-center gap-1"><svg class="size-[11px]" viewBox="0 0 11 11"><path d="M0.500 0.500h10v10h-10z" fill="#fff" stroke="#888"/><path d="M2 5.500h7" stroke="#000"/></svg><span>010802002001</span></div></td>
              <td class="text-center">项</td><td>彩板门</td><td></td><td></td><td></td><td></td><td></td><td></td><td></td><td></td><td></td><td></td><td></td></tr>
            <tr class="h-[20px] bg-white"><th></th>
              <td class="code"><i class="absolute left-2 inset-y-0 w-px bg-[#bbb]"></i><i class="absolute left-[17px] inset-y-0 w-px bg-[#bbb]"></i><i class="absolute left-[27px] inset-y-0 w-px bg-[#bbb]"></i><i class="absolute left-[27px] top-1/2 w-4 h-px bg-[#bbb]"></i><div class="pl-[45px] leading-none"><span>A17-30</span></div></td>
              <td class="text-center">定</td><td>实木装饰门安装</td><td></td><td></td><td></td><td></td><td></td><td></td><td></td><td></td><td></td><td></td><td></td></tr>
            <tr class="h-[19px] bg-white"><th class="!bg-[#fdd28e]"></th>
              <td class="code"><i class="absolute left-2 inset-y-0 w-px bg-[#bbb]"></i><i class="absolute left-[17px] inset-y-0 w-px bg-[#bbb]"></i><i class="absolute left-[27px] top-0 h-1/2 w-px bg-[#bbb]"></i><i class="absolute left-[27px] top-1/2 w-4 h-px bg-[#bbb]"></i><div class="pl-[45px] leading-none"><span>A17-83</span></div></td>
              <td class="text-center">定</td><td>木制防火门<span> </span>成品安装</td><td></td><td></td><td></td><td></td><td></td><td></td><td></td><td></td><td></td><td></td><td></td></tr>
            <tr class="h-[100px] bg-[#a9dbfb]"><th><span>41</span></th>
              <td class="code"><i class="absolute left-2 inset-y-0 w-px bg-[#a8b0b6]"></i><i class="absolute left-[17px] inset-y-0 w-px bg-[#a8b0b6]"></i><i class="absolute left-[27px] top-1/2 bottom-0 w-px bg-[#a8b0b6]"></i><div class="relative pl-[19px] flex items-center gap-1"><svg class="size-[11px]" viewBox="0 0 11 11"><path d="M0.500 0.500h10v10h-10z" fill="#fff" stroke="#888"/><path d="M2 5.500h7" stroke="#000"/></svg><span>010803001001</span></div></td>
              <td class="text-center">项</td><td>金属卷帘<span>(</span>闸）门</td><td></td><td></td><td></td><td></td><td></td><td></td><td></td><td></td><td></td><td></td><td></td></tr>
          </tbody>
        </table>
        </div>
        <div class="w-[18px] shrink-0 flex flex-col items-center pt-2"><svg class="w-2 h-[6px]" viewBox="0 0 8 6"><path d="M1 5l3-4 3 4" stroke="#444" stroke-width="1.500" fill="none"/></svg><div class="mt-[178px] w-[14px] h-4 bg-[#c8c8c8]"></div></div>
      </div>
      <div class="h-[19px] shrink-0 flex items-center pl-[6px] gap-[6px] border-b border-[#bbb]"><svg class="w-[6px] h-2" viewBox="0 0 6 8"><path d="M5 1L1.500 4 5 7" stroke="#444" stroke-width="1.500" fill="none"/></svg><div class="w-4 h-[15px] bg-[#cdcdcd]"></div></div>
      <div class="h-[31px] shrink-0 flex items-center pt-[6px] pl-[6px] [&>button]:pr-[9px] [&>button]:mr-[10px] [&>button]:border-r [&>button]:border-[#aaa] [&>button]:leading-5">
        <button>工料机显示</button><button>查看单价构成</button><button>标准换算</button><button>换算信息</button><button>安装费用</button>
      </div>
      <div class="h-[20px] shrink-0 pl-[4px] text-[#10107c] border-t border-white">子目工作内容和附注信息</div>
      <div class="flex-1 min-h-0 ml-px mr-[2px] mb-[2px] bg-white border border-[#888] pl-[2px] pt-[2px] leading-3"><p>工作内容:</p><p>门框扇安装.</p></div>
    </section>
  </div>

  <!-- input method bar -->
  <div class="absolute left-[768px] top-[3px] w-[195px] h-[23px] bg-white border border-[#b9cde0] flex items-center pl-[28px] gap-2 text-[#1e7bc8] [&>*]:shrink-0">
    <svg class="absolute -left-[7px] -top-[4px] size-[27px]"><use href="#sogou"/></svg>
    <button class="text-[14px] font-bold -ml-[2px]">中</button>
    <button aria-label="月亮"><svg class="size-[13px]" viewBox="0 0 12 12"><path d="M8 0c6 5 3 13-3 12-2 0-4-1-5-3 5 1 9-3 8-9z" fill="#1e7bc8"/></svg></button>
    <button aria-label="标点"><svg class="size-3" viewBox="0 0 12 12"><circle cx="2.500" cy="4" r="1.700" fill="none" stroke="#1e7bc8" stroke-width="1.300"/><path d="M8 5h3v3l-2 3H7.500L9 8H8z" fill="#1e7bc8"/></svg></button>
    <button aria-label="语音"><svg class="w-3 h-[14px]" viewBox="0 0 12 14"><rect x="3.500" width="5" height="8" rx="2.500" fill="#1e7bc8"/><path d="M1 6c0 6 10 6 10 0M6 10v3M3 13.300h6" stroke="#1e7bc8" stroke-width="1.400" fill="none"/></svg></button>
    <button aria-label="键盘"><svg class="w-4 h-[11px]" viewBox="0 0 16 11"><rect x="0.500" y="0.500" width="15" height="10" fill="none" stroke="#1e7bc8" stroke-width="1.300"/><path d="M2 3.500h12M2 5.800h12M3 8.500h10" stroke="#1e7bc8" stroke-width="1.200" stroke-dasharray="1.500 1"/></svg></button>
    <button aria-label="账户"><svg class="w-[15px] h-[14px]" viewBox="0 0 15 14"><circle cx="6" cy="3" r="3" fill="#b8c4d0"/><path d="M0 14V9c0-3 10-3 11 0v5z" fill="#b8c4d0"/><path d="M9 8h6v6H9z" fill="#d4dde6" stroke="#9aa8b6"/></svg></button>
    <button aria-label="皮肤"><svg class="w-[14px] h-3" viewBox="0 0 14 12"><path d="M4 0c1 2 5 2 6 0l4 2.500-2 3-1.500-1V12h-7V4.500l-1.500 1-2-3z" fill="#1e7bc8"/></svg></button>
    <button aria-label="工具"><svg class="size-[13px]" viewBox="0 0 13 13"><path d="M10 0.500L8 3l2 2 2.700-2c1 4-2 5.500-4.700 4.500L3 13 0.500 10.500 6 5.500C5 3 7-0.500 10 0.500z" fill="#1e7bc8"/></svg></button>
  </div>

  <!-- small recorder popup -->
  <div class="absolute left-[100px] top-[118px] w-[50px] shadow-[1px_1px_4px_rgba(0,0,0,0.4)]">
    <div class="h-6 bg-white pl-[2px] flex items-center text-[#999]">Poi...<i class="ml-auto w-[18px] h-[17px] bg-[#eee]"></i></div>
    <button class="block w-full h-[22px] bg-[#f0f0f0] border border-[#aaa] border-r-2 border-b-2 border-r-[#666] border-b-[#666]">开始</button>
  </div>

  <!-- query dialog -->
  <section class="absolute left-[492px] right-[7px] top-[193px] bottom-0 bg-[#f0f0f0] border-t border-r border-[#8f8f8f] shadow-[0_0_7px_rgba(0,0,0,0.5)] flex flex-col">
    <div class="h-[28px] shrink-0 bg-white flex items-center pl-[7px] gap-[6px] text-[#999]"><svg class="size-[15px]"><use href="#app"/></svg>查询
      <div class="ml-auto mr-[16px] flex gap-[33px]">
        <button aria-label="最小化"><svg class="size-3" viewBox="0 0 12 12"><path d="M1 6.500h10" stroke="#ddd"/></svg></button>
        <button aria-label="最大化"><svg class="size-3" viewBox="0 0 12 12"><path d="M1.500 1.500h9v9h-9z" fill="none" stroke="#888"/></svg></button>
        <button aria-label="关闭"><svg class="size-3" viewBox="0 0 12 12"><path d="M1 1l10 10M11 1L1 11" stroke="#999"/></svg></button>
      </div>
    </div>
    <div class="h-[27px] shrink-0 flex items-center pl-[7px]">
      <div class="flex items-center -mt-[4px] [&>button]:h-5 [&>button]:border-r [&>button]:border-[#aaa] [&>button]:text-left">
        <button class="w-[58px]">清单指引</button><button class="w-[52px] pl-[10px]">清单</button>
        <button class="w-[42px] mx-[4px] !border-2 !border-[#f8f8f8] !border-t-[#888] !border-l-[#888] pl-[4px] leading-4">定额</button>
        <i class="w-px h-5 bg-[#aaa]"></i><button class="w-[55px] pl-[9px]">人材机</button><button class="w-[80px] pl-[10px]">补充人材机</button>
      </div>
      <button class="ml-auto w-[71px] h-[23px] mt-[4px] bg-[#e1e1e1] border border-[#adadad]">插入(<u>I</u>)</button>
      <button class="ml-[4px] w-[68px] h-[23px] mt-[4px] bg-[#e1e1e1] border border-[#adadad]">替换(<u>R</u>)</button>
    </div>
    <div class="flex-1 min-h-0 flex">
      <div class="w-[213px] shrink-0 flex flex-col">
        <div class="relative w-[210px] h-[20px]">
          <select aria-label="定额库" class="appearance-none block w-full h-full bg-[#e1e1e1] border border-[#adadad] pl-[2px] pr-4 leading-4 overflow-hidden"><option>湖北省房屋建筑与装饰工程消耗量定</option></select>
          <svg class="absolute right-1 top-[8px] w-2 h-[5px] pointer-events-none" viewBox="0 0 8 5"><path d="M0.500 0.500L4 4l3.500-3.500" stroke="#555" fill="none"/></svg>
        </div>
        <div class="h-[25px] flex items-end"><button class="w-[61px] h-[23px] pl-[7px] pb-1 text-left bg-[#fafafa]">章节查询</button><button class="w-[56px] h-[20px] pl-[4px] text-left border border-[#ddd]">条件查询</button></div>
        <div class="ml-1 w-[203px] h-[359px] border border-[#888] flex flex-col">
          <div class="h-[340px] flex pt-[1px]">
            <div class="flex-1 min-w-0 bg-white overflow-hidden relative">
              <i class="absolute inset-y-0 left-[13px] border-l border-dotted border-[#888]"></i><i class="absolute inset-y-0 left-[31px] border-l border-dotted border-[#888]"></i><i class="absolute top-5 bottom-0 left-[50px] border-l border-dotted border-[#888]"></i>
              <ul class="h-[343px] grid auto-rows-fr font-['DejaVu_Sans_Mono','Noto_Sans_CJK_SC',monospace] [&_span]:text-[10px] [&>li]:flex [&>li]:items-center [&>li]:pl-[60px] [&_svg]:shrink-0 [&_svg]:w-5 [&_svg]:h-4">
                <li class="!pl-[41px]"><svg><use href="#open"/></svg>第五章门窗工程</li>
                <li><svg><use href="#leaf"/></svg>一、普通木门安装</li>
                <li><svg><use href="#leaf"/></svg>二、普通木窗安装</li>
                <li><svg><use href="#leaf"/></svg>三、实木装饰门安装</li>
                <li><svg><use href="#shut"/></svg>四、铝合金门窗、无</li>
                <li><svg><use href="#shut"/></svg>五、彩板组角钢门窗</li>
                <li><svg><use href="#open"/></svg>六、防盗装饰门窗、</li>
                <li><svg class="!w-[18px]"><use href="#vert"/></svg><svg><use href="#leaf"/></svg><span>1.</span>防盗装饰门窗安</li>
                <li><svg class="!w-[18px]"><use href="#vert"/></svg><svg><use href="#leafend"/></svg><span>2.</span>防盗栅<span>(</span>网<span>)</span>制作</li>
                <li><svg><use href="#leaf"/></svg>七、防火门窗、防火</li>
                <li><svg><use href="#shut"/></svg>八、厂库房大门、特</li>
                <li><svg><use href="#leaf"/></svg>九、其他门安装</li>
                <li><svg><use href="#shut"/></svg>十、包门框<span>(</span>扇<span>)</span></li>
                <li><svg><use href="#leaf"/></svg>十一、门窗贴脸、筒</li>
                <li><svg><use href="#leaf"/></svg>十二、窗帘盒、窗帘</li>
                <li><svg><use href="#leaf"/></svg>十三、窗台板</li>
                <li><svg><use href="#open"/></svg>十四、五金安装</li>
                <li><svg class="!w-[18px]"><use href="#vert"/></svg><svg><use href="#leaf"/></svg><span>1.</span>拉手安装</li>
                <li><svg class="!w-[18px]"><use href="#vert"/></svg><svg><use href="#leaf"/></svg><span>2.</span>门锁安装</li>
                <li><svg class="!w-[18px]"><use href="#vert"/></svg><svg><use href="#leafend"/></svg><mark class="bg-[#d9d9d9] leading-[15px] pr-2"><span>3.</span>特殊五金安装</mark></li>
                <li><svg><use href="#open"/></svg>十五、其他</li>
                <li><svg class="!w-[18px]"><use href="#vert"/></svg><svg><use href="#leaf"/></svg><span>1.</span>橱窗制作安装</li>
              </ul>
            </div>
            <div class="w-[18px] shrink-0 flex flex-col items-center justify-between pt-[6px] pb-[5px] relative">
              <svg class="w-2 h-[6px]" viewBox="0 0 8 6"><path d="M1 5l3-4 3 4" stroke="#444" stroke-width="1.500" fill="none"/></svg>
              <i class="absolute left-[2px] w-[14px] top-[129px] h-[123px] bg-[#cdcdcd]"></i>
              <svg class="w-2 h-[6px]" viewBox="0 0 8 6"><path d="M1 1l3 4 3-4" stroke="#444" stroke-width="1.500" fill="none"/></svg>
            </div>
          </div>
          <div class="flex-1 flex items-center pl-[5px]"><svg class="w-[6px] h-2" viewBox="0 0 6 8"><path d="M5 1L1.500 4 5 7" stroke="#444" stroke-width="1.500" fill="none"/></svg><i class="ml-[6px] w-[90px] h-[15px] bg-[#cdcdcd]"></i><svg class="ml-auto mr-[22px] w-[6px] h-2" viewBox="0 0 6 8"><path d="M1 1l3.500 3L1 7" stroke="#444" stroke-width="1.500" fill="none"/></svg></div>
        </div>
        <div class="flex-1 flex items-center pl-[15px] gap-[21px] [&>label]:flex [&>label]:items-center [&>label]:gap-[8px] [&_input]:appearance-none [&_input]:size-[10px] [&_input]:rounded-full [&_input]:border [&_input]:border-[#999] [&_input]:bg-white">
          <label><input type="radio" name="scope">标准</label><label><input type="radio" name="scope">补充</label><label><input type="radio" name="scope" checked class="checked:bg-[radial-gradient(#000_0_2px,#fff_3px)]">全部</label>
        </div>
      </div>
      <div class="flex-1 min-w-0 bg-white border-l border-t border-[#bbb] pl-px relative">
        <table class="w-[541px] h-[244px] table-fixed border-collapse font-['DejaVu_Sans_Mono','Noto_Sans_CJK_SC',monospace] [&_th]:font-normal [&_th]:bg-[#f0f0f0] [&_th]:p-0 [&_th]:border [&_th]:border-t-0 [&_th]:border-l-0 [&_th]:border-[#c4c4c4] [&_td]:border-r [&_td]:border-b [&_td]:border-[#c4c4c4] [&_td]:py-0 [&_td]:px-[2px] [&_td]:leading-4 [&_tbody_th]:text-[10px] [&_td:nth-child(2)]:text-[10px] [&_td:nth-child(5)]:text-[10px] [&_td:nth-child(6)]:text-[10px] [&_td:nth-child(5)]:text-right [&_td:nth-child(6)]:text-right [&_span]:text-[10px]">
          <colgroup><col class="w-[22px]"><col class="w-[61px]"><col><col class="w-[54px]"><col class="w-[64px]"><col class="w-[78px]"></colgroup>
          <thead><tr class="h-[20px]"><th></th><th>编码</th><th class="bg-gradient-to-b from-[#f8d999] to-[#f3bd55]">名称</th><th>单位</th><th>含税单价</th><th>不含税单价</th></tr></thead>
          <tbody>
            <tr><th class="!bg-[#fdd28e]">1</th><td>A17-197</td><td class="bg-[#d9e9f8]">门<span>(</span>猫<span>)</span>眼</td><td><span>10</span>套</td><td>193.68</td><td>173.18</td></tr>
            <tr><th>2</th><td>A17-198</td><td>门磁吸</td><td><span>10</span>套</td><td>192.66</td><td>190.3</td></tr>
            <tr><th>3</th><td>A17-199</td><td>防盗链<span>(</span>扣<span>)</span></td><td><span>10</span>套</td><td>574.98</td><td>501.16</td></tr>
            <tr><th>4</th><td>A17-200</td><td>地弹簧安装</td><td><span>10</span>个</td><td>1561.44</td><td>1419.57</td></tr>
            <tr><th>5</th><td>A17-201</td><td>吊轨安装</td><td><span>100m</span></td><td>3456.8</td><td>3104.1</td></tr>
            <tr><th>6</th><td>A17-202</td><td>下轨安装</td><td><span>100m</span></td><td>3192.8</td><td>2876.2</td></tr>
            <tr><th>7</th><td>A17-203</td><td>闭门器安装<span> </span>明装</td><td><span>10</span>套</td><td>961.36</td><td>847.9</td></tr>
            <tr><th>8</th><td>A17-204</td><td>闭门器安装<span> </span>暗装</td><td><span>10</span>套</td><td>1180.72</td><td>1067.26</td></tr>
            <tr><th>9</th><td>A17-205</td><td>全玻璃门配件安装<span> </span>上<span>(</span>下<span>)</span>门夹</td><td><span>10</span>个</td><td>1634.6</td><td>1423.13</td></tr>
            <tr><th>10</th><td>A17-206</td><td>全玻璃门配件安装<span> </span>锁夹</td><td><span>10</span>个</td><td>992.14</td><td>868.5</td></tr>
            <tr><th>11</th><td>A17-207</td><td>全玻璃门配件安装<span> </span>角夹</td><td><span>10</span>个</td><td>1660.93</td><td>1442.86</td></tr>
            <tr><th>12</th><td>A17-208</td><td>全玻璃门配件安装<span> </span>曲夹</td><td><span>10</span>个</td><td>987.14</td><td>864.18</td></tr>
          </tbody>
        </table>
        <div class="absolute -left-[4px] top-[129px] w-[405px] h-[43px] border-3 border-[#fb0000]"></div>
      </div>
    </div>
  </section>
</div>

<!-- previous / next picture -->
<button aria-label="上一张" class="absolute left-[20px] top-[313px] size-[75px] rounded-full border-4 border-white/80 bg-[#d8d8d8]/30 shadow-[0_0_4px_rgba(0,0,0,0.3)] flex items-center justify-center"><svg class="w-[46px] h-[44px] drop-shadow" viewBox="0 0 46 44"><path d="M42 22H6M22 5L5 22l17 17" stroke="#fff" stroke-opacity=".85" stroke-width="9" stroke-linecap="round" stroke-linejoin="round" fill="none"/></svg></button>
<button aria-label="下一张" class="absolute right-[20px] top-[313px] size-[75px] rounded-full border-4 border-white/90 bg-[#e8e8e8]/70 shadow-[0_0_4px_rgba(0,0,0,0.3)] flex items-center justify-center"><svg class="w-[46px] h-[44px] drop-shadow" viewBox="0 0 46 44"><path d="M4 22h36M24 5l17 17-17 17" stroke="#fff" stroke-width="9" stroke-linecap="round" stroke-linejoin="round" fill="none"/></svg></button>
</main>

<!-- taskbar -->
<footer class="h-10 shrink-0 bg-black text-white flex">
  <button aria-label="开始菜单" class="w-12 flex items-center justify-center"><svg class="w-[17px] h-[17px]" viewBox="0 0 17 17"><path d="M0 2.500l7.500-1V8H0zM8.500 1.300L17 0v8H8.500zM0 9h7.500v6.500L0 14.500zM8.500 9H17v8l-8.500-1.300z" fill="#fff"/></svg></button>
  <div class="w-[345px] bg-[#333] flex items-center pl-[9px] pr-[15px] gap-[5px]">
    <svg class="size-[22px] shrink-0" viewBox="0 0 22 22"><circle cx="11" cy="11" r="9" fill="none" stroke="#fff" stroke-width="3"/></svg>
    <input aria-label="搜索" placeholder="有问题尽管问我" class="flex-1 min-w-0 bg-transparent text-[14px] placeholder:text-[#999]">
    <svg class="w-[11px] h-4" viewBox="0 0 11 16" fill="none" stroke="#999"><rect x="3" y="0.500" width="5" height="10"/><path d="M0.500 7v5.500h10V7M5.500 13v3M3 15.500h5"/></svg>
  </div>
  <div class="flex ml-px [&>button]:w-[49px] [&>button]:flex [&>button]:items-center [&>button]:justify-center">
    <button aria-label="花瓣"><svg class="size-[22px]" viewBox="0 0 22 22" fill="#e6e6e6"><path d="M10 10C6 9 5 4 8 0.500 3 0 0 3 1 6c1 3 5 5 9 4zM12 10c-4-3-4-8 0-9.500 5-1 8 1 8 4-2 1-6 1-8 5.500zM12 12c1-4 5-7 9.500-4 1 4 0 8-3 8-1-3-3-4-6.500-4zM11 12c5 1 6 6 3 9.500 4 1 7-1 7-5-2-3-6-5-10-4.500zM10 12c3 4 2 9-2 9.500-4 0-6-2-6-4 3-1 6-2 8-5.500zM10 11c-3 4-7 5-9.500 2C0 10 0 8 2 7.500c2 2 5 3.500 8 3.500z"/></svg></button>
    <button aria-label="旋涡"><svg class="size-5" viewBox="0 0 20 20" fill="none" stroke="#ddd" stroke-width="1.300"><path d="M19 4c-3-1-3-3-9-3-5 0-9 4-9 9s4 9 8 9c6 0 10-4 8-9-1-2-5-2-6 0M19 2c-2 2-6 1-9 2-4 1-6 4-5 8 1 5 9 6 10 1 1-3-3-4-4-2"/></svg></button>
    <div class="w-6 flex items-center pl-[8px] gap-[3px]"><i class="w-px h-4 bg-[#444]"></i><i class="w-px h-4 bg-[#444]"></i></div>
    <button aria-label="Edge"><svg class="w-[20px] h-[21px]" viewBox="0 0 20 21"><path d="M0 10C1 4 5 0 10.500 0 16 0 20 4 20 9.500V12H7c0 6 8 6 12 3.500V19c-5 3-16 3-16-6 0-3 2-5.500 4.500-7C4 6 1.500 8 0 10zM7 8.500h7c0-5-6.500-5-7 0z" fill="#0a78d7"/></svg></button>
    <button aria-label="资源管理器"><svg class="w-[22px] h-[18px]" viewBox="0 0 22 18"><path d="M0 0h9l2 2h10v15H0z" fill="#f6d271"/><path d="M0 4h22v13H0z" fill="#fbe597"/><path d="M4 18v-7h14v7h-4v-3H8v3z" fill="#3fb1e6"/><path d="M2 1h5" stroke="#d49a20"/></svg></button>
    <button aria-label="应用商店"><svg class="w-[22px] h-6" viewBox="0 0 22 24"><path d="M6 6c0-6 6-7 8-1M9 5c1-4 6-5 7 0" stroke="#fff" stroke-width="1.300" fill="none"/><path d="M0 6h18l4-1v18L2 21.500z" fill="#fff"/><path d="M4 11l5-.5v4H4zM10 10.300l5-.5v4.700h-5zM4 15.500h5v4L4 19zM10 15.500h5v5l-5-.6z" fill="#000"/></svg></button>
    <button aria-label="加速" class="border-b-2 border-[#76b5ee] !w-10 mx-[4px]"><svg class="size-6" viewBox="0 0 24 24"><rect width="24" height="24" rx="4" fill="#1290f0"/><path d="M15 7a2.500 2.500 0 00-4 2v8M5 12c0 3 4 3 6 1h8M10 17.500c5 2 10 0 9-4.500" stroke="#fff" stroke-width="2" stroke-linecap="round" fill="none"/></svg></button>
    <button aria-label="看图王" class="bg-[#333] border-b-2 border-[#76b5ee]"><svg class="size-6"><use href="#viewer"/></svg></button>
    <button aria-label="计价软件" class="border-b-2 border-[#76b5ee] !w-10 mx-[5px]"><svg class="size-6"><use href="#app"/></svg></button>
    <button aria-label="浏览器" class="border-b-2 border-[#76b5ee] !w-10 ml-[4px]"><svg class="size-[22px]" viewBox="0 0 22 22"><circle cx="11" cy="11" r="10" fill="#3fae2e" stroke="#d7f0d0"/><path d="M2 17C4 8 12 0 20 1" stroke="#a8e08e" stroke-width="2" fill="none"/><path d="M16.500 14c-3 5-11 3.500-11-3 0-7 12-7 12 1H6" stroke="#fff" stroke-width="2.800" fill="none"/></svg></button>
  </div>
  <div class="ml-auto flex items-center pr-[4px]">
    <div class="text-center leading-[17px] mr-[20px]">34%<br>CPU使用</div>
    <button aria-label="显示隐藏图标" class="mr-[10px]"><svg class="w-3 h-2" viewBox="0 0 12 8"><path d="M0.500 7L6 1l5.500 6" stroke="#fff" stroke-width="1.300" fill="none"/></svg></button>
    <svg class="w-4 h-3 mr-[11px]" viewBox="0 0 16 12" fill="none" stroke="#fff"><path d="M4.500 3.500h10v7h-9M1 2.500h4v2.500H1zM1.500 0v2M4.500 0v2M3 5v5.500h2"/><path d="M7 5h6v4H7z" fill="#fff"/></svg>
    <svg class="w-3 h-3 mr-[9px]" viewBox="0 0 12 12" fill="none" stroke="#fff"><path d="M0.500 12C0.500 5 5 0.500 12 0.500M3.500 12c0-5 3.500-8.500 8.500-8.500M6.500 12c0-3 2.500-5.500 5.500-5.500"/><circle cx="10.500" cy="10.500" r="1" fill="#fff"/></svg>
    <svg class="w-4 h-[14px] mr-[8px]" viewBox="0 0 16 14" fill="none" stroke="#fff"><path d="M0.500 4.500h3l3.500-3.500v12L3.500 9.500h-3zM9 5c1 1 1 3 0 4M11 3c2 2 2 6 0 8M13 1c3 3 3 9 0 12"/></svg>
    <button class="text-[13px] font-bold mr-[14px]">中</button>
    <svg class="size-4 mr-[16px]"><use href="#sogou"/></svg>
    <div class="text-center leading-[19px] mr-[19px]">20:28<br>2017/3/11</div>
    <button aria-label="通知" class="mr-[20px]"><svg class="w-4 h-[15px]" viewBox="0 0 16 15"><path d="M0.500 0.500h15v11H10l-2 2.500-2-2.500H0.500z" fill="none" stroke="#fff" stroke-width="1.200"/></svg></button>
    <i class="w-px h-10 bg-[#555]"></i>
  </div>
</footer>
</body>
</html>
